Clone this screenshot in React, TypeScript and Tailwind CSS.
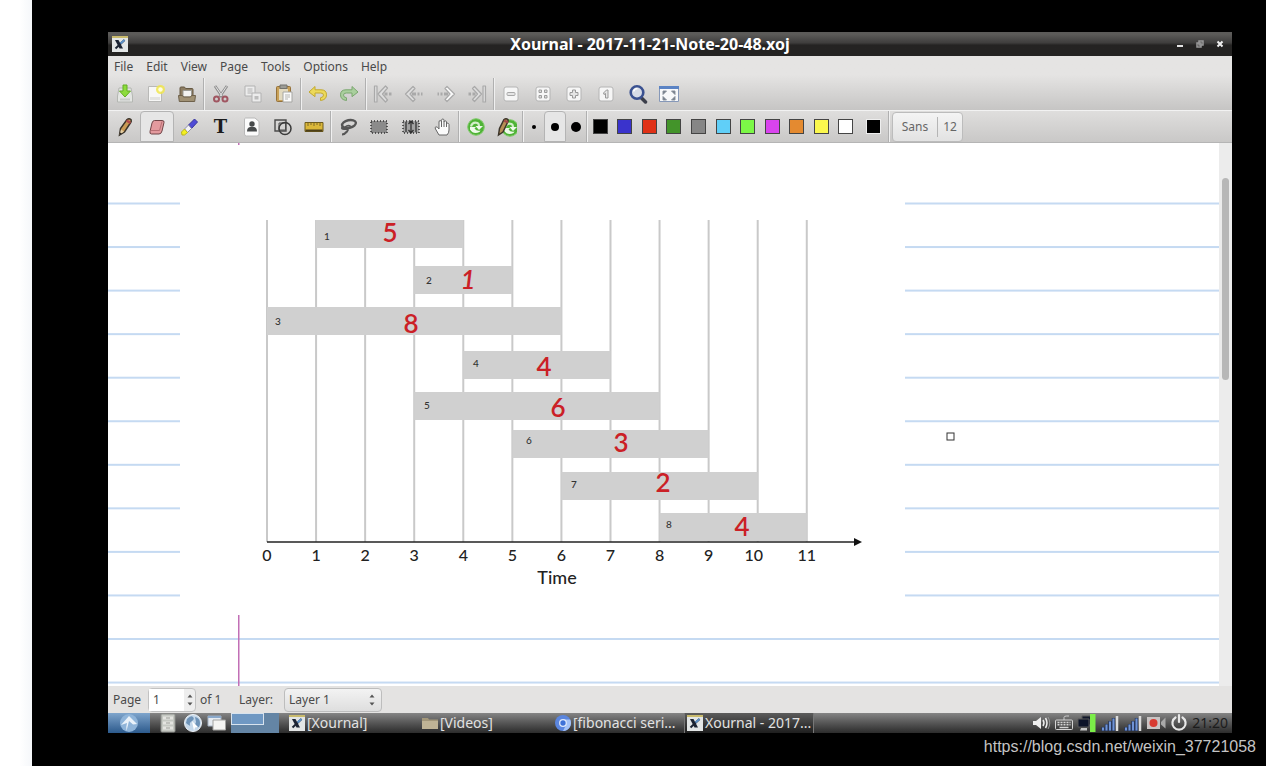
import React from "react";

type Tool = { name: string; icon: React.ReactNode; active?: boolean };

const UI_FONT = "font-['Noto_Sans','Open_Sans',sans-serif]";

const Icon = ({ children }: { children: React.ReactNode }) => (
  <svg viewBox="0 0 20 20" className="size-5" fill="none" aria-hidden="true">
    {children}
  </svg>
);

// Application logo, used in the title bar and in the task list
const AppLogo = () => (
  <svg viewBox="0 0 16 16" className="size-4 shrink-0" fill="none" aria-hidden="true">
    <rect width="16" height="16" fill="#e3e6e6" />
    <rect width="16" height="2" fill="#c9bb6d" />
    <path d="M3 4h3.500l4.500 8.500H7.500z" fill="#1c2433" />
    <path d="M12.500 4 3.500 12.500" stroke="#1c2433" strokeWidth="2" />
    <path d="m8.500 7.500 4-3.500" stroke="#5f93c9" strokeWidth="2" />
  </svg>
);

// --- main toolbar ---

const navStroke = { stroke: "#a9a9a9", strokeWidth: 1.2, strokeLinejoin: "round" as const };

const zoomFrame = (
  <rect x="3" y="3" width="14" height="14" rx="2" fill="#f6f6f6" stroke="#b4b4b4" />
);

const fileTools: Tool[] = [
  {
    name: "Save",
    icon: (
      <Icon>
        <path d="M4 4h12l1.500 8v6h-15v-6z" fill="#e4e6e3" stroke="#b4b7b2" />
        <path d="M5 14.500h10v2H5z" fill="#c9cbc8" />
        <path d="M8 1h4v6h3.500L10 13 4.500 7H8z" fill="#8ddc3c" stroke="#63ad22" />
      </Icon>
    ),
  },
  {
    name: "New",
    icon: (
      <Icon>
        <path d="M2.500 2.500h13v15h-13z" fill="#f7f7f6" stroke="#b9b9b7" />
        <path d="M4 13h10v3H4z" fill="#e3e3e1" />
        <circle cx="14.500" cy="5.500" r="4.500" fill="#f1e64c" opacity=".85" />
        <circle cx="14.500" cy="5.500" r="2.200" fill="#fffde0" />
      </Icon>
    ),
  },
  {
    name: "Open",
    icon: (
      <Icon>
        <path d="M3 15V4q0-1 1-1h3.500l1 1.500H15q1 0 1 1V15z" fill="#8d7d62" stroke="#665943" />
        <path d="M6 6.500h8.500V13H6z" fill="#f3f3f1" stroke="#9b9b96" />
        <path d="M1.500 11.500h4l1 1.500h7l1-1.500h4l-.8 6H2.300z" fill="#a09174" stroke="#6e614b" />
      </Icon>
    ),
  },
];

const editTools: Tool[] = [
  {
    name: "Cut",
    icon: (
      <Icon>
        <path d="m4 2 7.500 11M16 2 8.500 13" stroke="#8f8f8f" strokeWidth="2.800" />
        <path d="m4.500 2.500 6.500 9.500M15.500 2.500 9 12" stroke="#e6e6e6" />
        <circle cx="5.500" cy="15" r="2.500" stroke="#a05661" strokeWidth="2" />
        <circle cx="14" cy="15" r="2.500" stroke="#a05661" strokeWidth="2" />
      </Icon>
    ),
  },
  {
    name: "Copy",
    icon: (
      <Icon>
        <path d="M2 2h10v10H2z" fill="#ececec" stroke="#b2b2b2" />
        <path d="M4.500 5h5M4.500 7h5M4.500 9h5" stroke="#b2b2b2" />
        <path d="M9 9h9v9H9z" fill="#ececec" stroke="#b2b2b2" />
        <path d="M11.500 12h4v3.500h-4z" fill="#bcbcbc" />
      </Icon>
    ),
  },
  {
    name: "Paste",
    icon: (
      <Icon>
        <rect x="2.500" y="2.500" width="14" height="15" rx="1" fill="#c9a158" stroke="#94713a" />
        <path d="M5 5h9v11H5z" fill="#e2d9bf" />
        <path d="M6 1h7v3.500H6z" fill="#9c9c96" stroke="#73736e" />
        <path d="M9 8h9v10H9z" fill="#fafafa" stroke="#a6a6a3" />
        <path d="M11 11h5M11 13h5M11 15h3" stroke="#b5b5b2" />
      </Icon>
    ),
  },
];

const historyTools: Tool[] = [
  {
    name: "Undo",
    icon: (
      <Icon>
        <path d="M1 8 7 2.500v3.300h6q5.500 0 5.500 5 0 5-6 5.700v-2.700q3-.5 3-2.700 0-2.100-2.800-2.100H7v3.700z" fill="#ecd95a" stroke="#c2a92f" />
      </Icon>
    ),
  },
  {
    name: "Redo",
    icon: (
      <Icon>
        <path d="m19 8-6-5.500v3.300H7q-5.500 0-5.500 5 0 5 6 5.700v-2.700q-3-.5-3-2.700Q4.500 9 7.300 9H13v3.700z" fill="#a9cf9d" stroke="#7ba76f" />
      </Icon>
    ),
  },
];

const pageTools: Tool[] = [
  {
    name: "First page",
    icon: (
      <Icon>
        <path d="M1.500 2H4v16H1.500z" fill="#dedede" {...navStroke} />
        <path d="M12.500 2 5 10l7.500 8 2-2L9.500 10l5-6z" fill="#dedede" {...navStroke} />
        <path d="M11.500 10h3M16 10h2.500" stroke="#a9a9a9" strokeWidth="3" />
      </Icon>
    ),
  },
  {
    name: "Previous page",
    icon: (
      <Icon>
        <path d="M9 2.500 1.500 10 9 17.500l2-2L6 10l5-5.500z" fill="#dedede" {...navStroke} />
        <path d="M8 10h4M13.500 10h2M17 10h1.500" stroke="#a9a9a9" strokeWidth="3" />
      </Icon>
    ),
  },
  {
    name: "Next page",
    icon: (
      <Icon>
        <path d="m11 2.500 7.500 7.500-7.500 7.500-2-2 5-5.500-5-5.500z" fill="#fafafa" {...navStroke} />
        <path d="M8 10h4M4.500 10h2M1.500 10H3" stroke="#a9a9a9" strokeWidth="3" />
      </Icon>
    ),
  },
  {
    name: "Last page",
    icon: (
      <Icon>
        <path d="M16 2h2.500v16H16z" fill="#dedede" {...navStroke} />
        <path d="m7.500 2.500 7 7.500-7 7.500-2-2L10.500 10l-5-5.500z" fill="#dedede" {...navStroke} />
        <path d="M5.500 10h3M1.500 10H4" stroke="#a9a9a9" strokeWidth="3" />
      </Icon>
    ),
  },
];

const zoomTools: Tool[] = [
  {
    name: "Zoom out",
    icon: (
      <Icon>
        {zoomFrame}
        <rect x="6" y="8.500" width="8" height="3" rx="1" fill="#e5e5e5" stroke="#a8a8a8" />
      </Icon>
    ),
  },
  {
    name: "Page width",
    icon: (
      <Icon>
        {zoomFrame}
        <path d="M6 6h2.500v2.500H6zM11.500 6H14v2.500h-2.500zM6 11.500h2.500V14H6zM11.500 11.500H14V14h-2.500z" fill="#dcdcdc" stroke="#9d9d9d" />
      </Icon>
    ),
  },
  {
    name: "Zoom in",
    icon: (
      <Icon>
        {zoomFrame}
        <path d="M8.500 6h3v2.500H14v3h-2.500V14h-3v-2.500H6v-3h2.500z" fill="#e5e5e5" stroke="#999" strokeLinejoin="round" />
      </Icon>
    ),
  },
  {
    name: "Normal size",
    icon: (
      <Icon>
        {zoomFrame}
        <path d="M7.500 9 10.500 6H12v8H9.500V9.500L8 10.500z" fill="#e5e5e5" stroke="#999" />
      </Icon>
    ),
  },
  {
    name: "Set zoom",
    icon: (
      <Icon>
        <path d="m13 13.500 4.500 4.500" stroke="#3b3e4a" strokeWidth="3.500" strokeLinecap="round" />
        <circle cx="9" cy="8.500" r="6.300" fill="#d7dce6" stroke="#3a5190" strokeWidth="2.600" />
        <path d="M5.500 7.500q1-3 4-3" stroke="#fff" strokeWidth="1.500" />
      </Icon>
    ),
  },
  {
    name: "Fullscreen",
    icon: (
      <Icon>
        <path d="M.500 2.500h19v15h-19z" fill="#f7f8fa" stroke="#8698b8" />
        <path d="M0 2h20v3H0z" fill="#5b83c4" />
        <path d="m4 7 3.500 0-3.500 3.500zM16 7v3.500L12.500 7zM4 16v-3.500L7.500 16zM16 16h-3.500l3.500-3.500z" fill="#66707e" stroke="#8b939e" />
      </Icon>
    ),
  },
];

// --- pen toolbar ---

const drawTools: Tool[] = [
  {
    name: "Pen",
    icon: (
      <Icon>
        <path d="M4.500 18 5.500 11.500 12 2.500q2-1.500 4 0 .7 1.500-.3 3L9.500 15z" fill="#c99a55" stroke="#3b342a" strokeWidth="1.500" />
        <path d="m11.500 3.500 4 2.500" stroke="#b24b4b" strokeWidth="2.500" />
        <path d="m6 12.500 3 2-4.500 3.500z" fill="#e5cfa4" />
        <path d="m5 15.500 2 1-2.500 2z" fill="#222" />
      </Icon>
    ),
  },
  {
    name: "Eraser",
    active: true,
    icon: (
      <Icon>
        <path d="M7.500 3.500h7.500q2.500 0 2 2l-2 8.500q-.7 3-3 3H4.500q-2 0-1.500-2.500L5 6q.7-2.500 2.500-2.500z" fill="#e39a9e" stroke="#6f4447" />
        <path d="M3.500 13.500h9l2.500-9" stroke="#b86f74" />
      </Icon>
    ),
  },
  {
    name: "Highlighter",
    icon: (
      <Icon>
        <path d="m9.500 8 6-6 3 3-6 6.500z" fill="#4f4bd6" stroke="#38349c" />
        <path d="m5.500 12 4-4 3 3.500-4 4z" fill="#f3f3f6" stroke="#8f8fae" />
        <path d="m2.500 15 3-3 3 3.500-3 2.500H3z" fill="#f4f01f" stroke="#b9b520" />
      </Icon>
    ),
  },
  {
    name: "Text",
    icon: <span className="font-['DejaVu_Serif',serif] text-lg leading-5 font-bold text-[#1c1c1c]">T</span>,
  },
  {
    name: "Image",
    icon: (
      <Icon>
        <path d="M3.500 1h9.500l4 3.500V17q0 2-2 2H4.500q-2 0-2-2V3q0-2 1-2z" fill="#fbfbfb" stroke="#b9b9b9" />
        <circle cx="10" cy="7" r="2.700" fill="#474a4b" />
        <path d="M5 14.500q0-4 3-4.500h4q3 .5 3 4.500z" fill="#474a4b" />
      </Icon>
    ),
  },
  {
    name: "Shape recognizer",
    icon: (
      <Icon>
        <path d="M2 3h11v11H2z" stroke="#4c4c4c" strokeWidth="1.400" />
        <path d="M6 6h6.500v7H6z" stroke="#4c4c4c" />
        <circle cx="12" cy="11.500" r="6" stroke="#3a3a3a" strokeWidth="1.500" />
      </Icon>
    ),
  },
  {
    name: "Ruler",
    icon: (
      <Icon>
        <path d="M1 5.500h18v9H1z" fill="#dbb83a" stroke="#6f5c1c" />
        <path d="M1.500 12.500h17v2h-17z" fill="#4c3f18" />
        <path d="M4 6v3M7 6v2M10 6v3M13 6v2M16 6v3" stroke="#7c692a" />
      </Icon>
    ),
  },
];

const selectTools: Tool[] = [
  {
    name: "Select region",
    icon: (
      <Icon>
        <ellipse cx="11" cy="7" rx="7" ry="3.800" transform="rotate(-12 11 7)" stroke="#565656" strokeWidth="2.400" />
        <path d="M7 10q3-2.500 6-.5" stroke="#565656" strokeWidth="1.500" />
        <path d="M4.500 9.500q-2 3 2.500 2.500t2 2.500T4 17.500" stroke="#565656" strokeWidth="2" />
      </Icon>
    ),
  },
  {
    name: "Select rectangle",
    icon: (
      <Icon>
        <path d="M2 4h16v12H2z" fill="#8b8b8b" stroke="#333" strokeWidth="1.500" strokeDasharray="1 2" />
      </Icon>
    ),
  },
  {
    name: "Vertical space",
    icon: (
      <Icon>
        <path d="M2 4h16v12H2z" fill="#a3a3a3" stroke="#333" strokeWidth="1.500" strokeDasharray="1 2" />
        <path d="M10 4v12M7.500 7 10 4l2.500 3M7.500 13l2.500 3 2.500-3M5 5v10M15 5v10" stroke="#333" strokeWidth="1.300" />
      </Icon>
    ),
  },
  {
    name: "Hand tool",
    icon: (
      <Icon>
        <path d="M7 18 3.500 12q-1-2 .5-2.200T7 12V5q0-1.500 1.200-1.500T9.500 5V3.500Q9.500 2 10.800 2T12 3.500V5q.2-1.300 1.300-1.200T14.500 5v2q.3-1 1.200-.9T17 7.500V13q0 3-2 5z" fill="#fbfbfb" stroke="#666" />
        <path d="M9.500 5v5M12 5v5M14.500 6.500V10" stroke="#666" />
      </Icon>
    ),
  },
];

const recycle = (
  <>
    <circle cx="10" cy="10" r="8.300" fill="#4fb336" stroke="#82cb6c" />
    <path d="M5 9.500Q6.500 4.500 11.500 6q1.500.8 1.500 3" stroke="#d3efc9" strokeWidth="2.200" />
    <path d="M9.500 9H17l-4 4z" fill="#eefaea" />
    <path d="M4 12.500q3.500 5.500 9.500 2.500l1-1.500q-4 .8-6-2L10 10H4z" fill="#eefaea" />
  </>
);

const defaultTools: Tool[] = [
  { name: "Default", icon: <Icon>{recycle}</Icon> },
  {
    name: "Default pen",
    icon: (
      <Icon>
        <g transform="translate(3 1)">{recycle}</g>
        <path d="M1.500 18 2.500 11.500 7 2.500q2-1.500 4 0 .5 1.500-.5 3L6 15z" fill="#b68e55" stroke="#3b342a" strokeWidth="1.500" />
        <path d="m7 3.500 4 2" stroke="#a34848" strokeWidth="2" />
      </Icon>
    ),
  },
];

const thicknesses: Tool[] = [
  { name: "Fine", icon: <span className="size-1 rounded-full bg-black" /> },
  { name: "Medium", active: true, icon: <span className="size-2 rounded-full bg-black" /> },
  { name: "Thick", icon: <span className="size-[10px] rounded-full bg-black" /> },
];

const colors = [
  { name: "Black", swatch: "bg-black" },
  { name: "Blue", swatch: "bg-[#3a33cc]" },
  { name: "Red", swatch: "bg-[#e03116]" },
  { name: "Green", swatch: "bg-[#43942a]" },
  { name: "Gray", swatch: "bg-[#868686]" },
  { name: "Light blue", swatch: "bg-[#60cff8]" },
  { name: "Light green", swatch: "bg-[#7cf847]" },
  { name: "Magenta", swatch: "bg-[#d944ee]" },
  { name: "Orange", swatch: "bg-[#e48a30]" },
  { name: "Yellow", swatch: "bg-[#fbf84e]" },
  { name: "White", swatch: "bg-white" },
];

const Separator = () => <div className="w-[2px] shrink-0 border-l border-[#b0b0b0] bg-[#f0f0f0]" />;

const ToolGroup = ({ tools, width }: { tools: Tool[]; width: string }) => (
  <div className={`flex shrink-0 ${width}`}>
    {tools.map(tool => (
      <button
        key={tool.name}
        aria-label={tool.name}
        className={
          tool.active
            ? "flex flex-1 items-center justify-center rounded-t border border-[#b4b4b4] bg-[#e6e6e6]"
            : "flex flex-1 items-center justify-center"
        }
      >
        {tool.icon}
      </button>
    ))}
  </div>
);

// --- document page ---

const UNIT = 49.07;
const ORIGIN = 159;
const AXIS = 399;

// x / y place the handwritten weight, idX / idY the small job number
const jobs = [
  { id: 1, start: 1, end: 4, top: 77, idX: 219, idY: 97, weight: 5, x: 282, y: 99 },
  { id: 2, start: 3, end: 5, top: 123, idX: 321, idY: 141, weight: 1, x: 360, y: 146 },
  { id: 3, start: 0, end: 6, top: 164, idX: 170, idY: 182, weight: 8, x: 303, y: 190 },
  { id: 4, start: 4, end: 7, top: 208, idX: 368, idY: 224, weight: 4, x: 436, y: 233 },
  { id: 5, start: 3, end: 8, top: 249, idX: 319, idY: 266, weight: 6, x: 450, y: 274 },
  { id: 6, start: 5, end: 9, top: 287, idX: 421, idY: 301, weight: 3, x: 513, y: 309 },
  { id: 7, start: 6, end: 10, top: 329, idX: 466, idY: 345, weight: 2, x: 555, y: 349 },
  { id: 8, start: 8, end: 11, top: 370, idX: 561, idY: 385, weight: 4, x: 634, y: 393 },
];

const ticks = Array.from({ length: 12 }, (_, i) => i);

const NotePage = () => (
  <svg className="h-[543px] w-full bg-white" role="img" aria-label="Weighted interval schedule">
    {ticks.map(i => (
      <rect key={i} x="0" y={59.5 + i * 43.55} width="100%" height="2" fill="#c5daf2" />
    ))}
    <rect x="130" y="0" width="1.500" height="543" fill="#c26fb6" />
    <rect x="72" y="2" width="725" height="470" fill="#fff" />

    {ticks.map(i => (
      <rect key={i} x={ORIGIN + i * UNIT - 1} y="77" width="2" height={AXIS - 77} fill="#c9c9c9" />
    ))}
    {jobs.map(job => (
      <g key={job.id}>
        <rect
          x={ORIGIN + job.start * UNIT}
          y={job.top}
          width={(job.end - job.start) * UNIT}
          height="28"
          fill="#d0d0d0"
        />
        <text x={job.idX} y={job.idY} textAnchor="middle" className="fill-[#333] font-['Lato',sans-serif] text-[10px] font-medium">
          {job.id}
        </text>
        <text
          x={job.x}
          y={job.y}
          textAnchor="middle"
          className={
            job.weight === 1
              ? "fill-[#cb2026] font-['Lato',sans-serif] text-[26px] font-semibold italic"
              : "fill-[#cb2026] font-['Lato',sans-serif] text-[26px] font-semibold"
          }
        >
          {job.weight}
        </text>
      </g>
    ))}

    <path d={`M${ORIGIN} ${AXIS}h588`} stroke="#222" strokeWidth="1.500" />
    <path d={`M746 ${AXIS - 4}l8 4-8 4z`} fill="#111" />
    {ticks.map(i => (
      <text
        key={i}
        x={ORIGIN + i * UNIT - (i === 10 ? 4 : 0)}
        y="418"
        textAnchor="middle"
        className="fill-[#222] font-['Lato',sans-serif] text-base font-medium"
      >
        {i}
      </text>
    ))}
    <text x="449" y="441" textAnchor="middle" className="fill-[#222] font-['Lato',sans-serif] text-lg font-medium">
      Time
    </text>

    {/* eraser cursor */}
    <rect x="839" y="290" width="7" height="7" fill="#fff" stroke="#333" />
  </svg>
);

// --- taskbar ---

const FolderIcon = () => (
  <svg viewBox="0 0 16 16" className="size-4 shrink-0" aria-hidden="true">
    <path d="M0 3h6l1 1.500h9V14H0z" fill="#a3977a" />
    <path d="M0 6h16v8H0z" fill="#c0b496" />
  </svg>
);

const BrowserIcon = () => (
  <svg viewBox="0 0 16 16" className="size-4 shrink-0" fill="none" aria-hidden="true">
    <circle cx="8" cy="8" r="8" fill="#5b86df" />
    <path d="M8 4.500h7.200A8 8 0 0 1 8 16l3-6z" fill="#a6c3f7" />
    <circle cx="8" cy="8" r="3.300" fill="#3f72d8" stroke="#dfe9fb" strokeWidth="1.300" />
  </svg>
);

const tasks = [
  { label: "[Xournal]", icon: <AppLogo /> },
  { label: "[Videos]", icon: <FolderIcon /> },
  { label: "[fibonacci seri...", icon: <BrowserIcon /> },
  { label: "Xournal - 2017...", icon: <AppLogo />, active: true },
];

const SignalIcon = () => (
  <Icon>
    <path d="M3 18v-4M6.500 18v-7M10 18V8M13.500 18V5" stroke="#27375c" strokeWidth="3.400" />
    <path d="M3 17.500v-3M6.500 17.500v-6M10 17.500V8.500M13.500 17.500V5.500" stroke="#6f93d6" strokeWidth="2" />
    <path d="M17 18V3" stroke="#dcdcdc" strokeWidth="2.500" />
  </Icon>
);

const tray: Tool[] = [
  {
    name: "Volume",
    icon: (
      <Icon>
        <path d="M2 8h3l5-4v12l-5-4H2z" fill="#eee" />
        <path d="M12 7q2 3 0 6M14.500 5q3 5 0 10" stroke="#eee" strokeWidth="1.500" />
        <path d="M17 4q3.500 6 0 12" stroke="#999" />
      </Icon>
    ),
  },
  {
    name: "Keyboard",
    icon: (
      <Icon>
        <path d="M10 7V4.500q0-1.500 2.500-1.500H15" stroke="#ccc" />
        <rect x="1.500" y="7" width="17" height="9.500" rx="1" stroke="#d4d4d4" />
        <path d="M3.500 9.500h13M3.500 11.800h13" stroke="#d4d4d4" strokeWidth="1.500" strokeDasharray="2 1" />
        <path d="M5.500 14.500h9" stroke="#d4d4d4" strokeWidth="1.500" />
      </Icon>
    ),
  },
  {
    name: "Network",
    icon: (
      <Icon>
        <path d="M5 3h9v9H5z" fill="#12182b" stroke="#595959" />
        <path d="M1 6h11v8H1z" fill="#0c1328" stroke="#595959" />
        <path d="M4 15h6v2.500H3z" fill="#c6c6c6" />
        <path d="M13 1h5.500v18H13z" fill="#7bee48" />
      </Icon>
    ),
  },
  { name: "Wireless signal", icon: <SignalIcon /> },
  { name: "Mobile signal", icon: <SignalIcon /> },
  {
    name: "Recorder",
    icon: (
      <Icon>
        <path d="M1 4h13v12H1z" fill="#c9c4c4" />
        <path d="m15 9 4.500-4.500v11L15 11.500z" fill="#a9a9a9" />
        <circle cx="7.500" cy="10" r="4" fill="#d83a31" />
      </Icon>
    ),
  },
  {
    name: "Power",
    icon: (
      <Icon>
        <path d="M6.500 4.500a6.600 6.600 0 1 0 7 0" stroke="#e8e8e8" strokeWidth="2.200" strokeLinecap="round" />
        <path d="M10 2v7" stroke="#e8e8e8" strokeWidth="2.200" strokeLinecap="round" />
      </Icon>
    ),
  },
];

const Arrows = () => (
  <svg viewBox="0 0 8 14" className="h-[14px] w-2" fill="#555" aria-hidden="true">
    <path d="M1.500 4.500 4 1.500l2.500 3zM1.500 9.500 4 12.500l2.500-3z" />
  </svg>
);

const Taskbar = () => (
  <footer className="flex h-5 bg-linear-to-b from-[#858585] to-[#2c2c2c] text-sm text-[#e2e2e2]">
    <button aria-label="Menu" className="flex w-[42px] items-center justify-center bg-linear-to-b from-[#7fa5cc] to-[#2c5a8c]">
      <svg viewBox="0 0 20 20" className="size-5" aria-hidden="true">
        <circle cx="10" cy="10" r="9" fill="#8fb4d9" />
        <path d="M2 12 10 3l8 8-4 .5L10 8l-2.500 10Q7 13 8 10z" fill="#eaf2fa" />
      </svg>
    </button>
    <div className="flex w-[81px] items-center justify-between pr-1 pl-2">
      <button aria-label="File manager">
        <Icon>
          <rect x="3" y="1" width="14" height="18" rx="1" fill="#c5c8c2" stroke="#8d8f8b" />
          <path d="M5 5h10M5 10h10M5 15h10" stroke="#e4e4e0" strokeWidth="3" />
          <path d="M8 5h4M8 10h4M8 15h4" stroke="#9a9c97" />
        </Icon>
      </button>
      <button aria-label="Web browser">
        <Icon>
          <circle cx="10" cy="10" r="8.500" fill="#c5d8ea" stroke="#eef3f8" />
          <path d="M4 6q4-4 6-2t-1 4-2 4-4-2zM12 4q5 1 5 6t-3 4-1-5z" fill="#6e93b8" />
          <path d="m9 8 6 6-3 .5L11 18z" fill="#fff" />
        </Icon>
      </button>
      <button aria-label="Show desktop">
        <Icon>
          <path d="M1 3h13v10H1z" fill="#e6ebf1" stroke="#a7b4c4" />
          <path d="M6 7h12.500v10H6z" fill="#f4f4f2" stroke="#a2a2a0" />
          <path d="M1 3h13v2H1z" fill="#8ba9cb" />
        </Icon>
      </button>
    </div>
    <div className="w-12 bg-[#6485a5]">
      <div className="h-3 w-[33px] border border-[#d8e3ee] bg-[#6f98c3]" />
    </div>
    <div className="ml-[6px] flex min-w-0">
      {tasks.map(task => (
        <button
          key={task.label}
          className={
            task.active
              ? "flex w-[130px] items-center gap-[2px] border-x border-[#777] bg-black/30 pl-[2px] whitespace-nowrap"
              : "flex w-[133px] items-center gap-[2px] pl-1 whitespace-nowrap"
          }
        >
          {task.icon}
          {task.label}
        </button>
      ))}
    </div>
    <div className="ml-auto flex items-center gap-[3px] pr-1">
      {tray.map(item => (
        <React.Fragment key={item.name}>{item.icon}</React.Fragment>
      ))}
      <time className="text-[#1c1c1c]">21:20</time>
    </div>
  </footer>
);

const menus = ["File", "Edit", "View", "Page", "Tools", "Options", "Help"];

export default function App() {
  return (
    <div className={`flex min-h-screen bg-black text-xs text-[#4a4a4a] ${UI_FONT}`}>
      <div className="w-8 shrink-0 bg-linear-to-r from-white from-60% to-[#f5f7fa]" />
      <div className="flex min-w-0 flex-1 flex-col pt-8">
        <div className="mr-[34px] ml-[76px] flex flex-col overflow-hidden bg-[#e4e3e2]">
          <header className="flex h-6 items-center bg-linear-to-b from-[#5c5b59] from-10% via-[#3f3e3d] via-45% to-[#242322] to-55%">
            <div className="w-6 shrink-0 pl-1">
              <AppLogo />
            </div>
            <h1 className="flex-1 text-center text-base leading-6 font-bold text-white">
              Xournal - 2017-11-21-Note-20-48.xoj
            </h1>
            <div className="flex w-16 shrink-0 gap-1 pl-1">
              <button aria-label="Minimize" className="w-4">
                <svg viewBox="0 0 16 16" className="size-4" aria-hidden="true">
                  <path d="M5 9h6v2H5z" fill="#e4e4e4" />
                </svg>
              </button>
              <button aria-label="Restore" className="w-4">
                <svg viewBox="0 0 16 16" className="size-4" fill="none" aria-hidden="true">
                  <path d="M7 5h4v4H7zM5 7h4v4H5z" stroke="#9a9a9a" strokeWidth="1.500" />
                </svg>
              </button>
              <button aria-label="Close" className="w-4">
                <svg viewBox="0 0 16 16" className="size-4" aria-hidden="true">
                  <path d="m5.500 5.500 5 5m0-5-5 5" stroke="#f0f0f0" strokeWidth="2" />
                </svg>
              </button>
            </div>
          </header>

          <div className="bg-linear-to-b from-[#e5e4e3] from-35% to-[#c6c5c4]">
            <nav className="flex h-[22px] items-center gap-[13px] pl-[6px]">
              {menus.map(menu => (
                <button key={menu}>{menu}</button>
              ))}
            </nav>
            <div className="flex h-8 pl-px">
              <ToolGroup tools={fileTools} width="w-[94px]" />
              <Separator />
              <ToolGroup tools={editTools} width="w-[95px]" />
              <Separator />
              <ToolGroup tools={historyTools} width="w-[63px]" />
              <Separator />
              <ToolGroup tools={pageTools} width="w-[126px]" />
              <Separator />
              <ToolGroup tools={zoomTools} width="w-[190px]" />
            </div>
          </div>

          <div className="flex h-[33px] border-t border-b border-t-[#f2f2f2] border-b-[#b5b5b5] bg-linear-to-b from-[#dfdedd] to-[#c9c8c7] pl-px">
            <ToolGroup tools={drawTools} width="w-[221px]" />
            <Separator />
            <ToolGroup tools={selectTools} width="w-[126px]" />
            <Separator />
            <ToolGroup tools={defaultTools} width="w-[62px]" />
            <Separator />
            <ToolGroup tools={thicknesses} width="w-[62px]" />
            <Separator />
            <div className="flex w-[270px] shrink-0">
              {colors.map(color => (
                <button key={color.name} aria-label={color.name} className="flex flex-1 items-center justify-center">
                  <span className={`size-[15px] border border-[#444] ${color.swatch}`} />
                </button>
              ))}
            </div>
            <button aria-label="Current color" className="flex w-[30px] shrink-0 items-center justify-center">
              <span className="size-[15px] border border-[#eee] bg-black" />
            </button>
            <Separator />
            <button className="ml-[2px] flex w-[71px] shrink-0 items-center self-center rounded-sm border border-[#bcbcbc] bg-linear-to-b from-[#f4f4f4] to-[#e2e2e2] py-1 text-[#666]">
              <span className="flex-1 border-r border-[#b5b5b5] leading-5">Sans</span>
              <span className="w-6 leading-5">12</span>
            </button>
          </div>

          <main className="flex">
            <div className="min-w-0 flex-1">
              <NotePage />
            </div>
            <div className="flex w-[13px] shrink-0 justify-center bg-[#ececec] pt-[35px]">
              <div className="h-[202px] w-[7px] rounded-full bg-[#b7b7b7]" />
            </div>
          </main>

          <div className="flex h-[27px] items-center pl-[5px]">
            <label htmlFor="page" className="w-[35px]">
              Page
            </label>
            <div className="flex h-6 w-12 items-center rounded-sm border border-[#c2c2c2] bg-[#eee]">
              <input id="page" defaultValue="1" className="h-full w-[35px] bg-white pl-1 outline-none" />
              <span className="pl-[2px]">
                <Arrows />
              </span>
            </div>
            <span className="ml-1 w-7">of 1</span>
            <label htmlFor="layer" className="ml-[11px] w-[45px]">
              Layer:
            </label>
            <div className="grid h-6 w-[98px] items-center rounded-sm border border-[#bdbdbd] bg-linear-to-b from-[#f3f3f3] to-[#dedede]">
              <select id="layer" className="col-start-1 row-start-1 h-full appearance-none pl-1 outline-none">
                <option>Layer 1</option>
              </select>
              <span className="pointer-events-none col-start-1 row-start-1 mr-[5px] justify-self-end">
                <Arrows />
              </span>
            </div>
          </div>

          <Taskbar />
        </div>

        <a
          href="https://blog.csdn.net/weixin_37721058"
          className="mr-[10px] self-end font-['Liberation_Sans',Arial,sans-serif] text-base leading-7 text-[#c4c4c4]"
        >
          https://blog.csdn.net/weixin_37721058
        </a>
      </div>
    </div>
  );
}
